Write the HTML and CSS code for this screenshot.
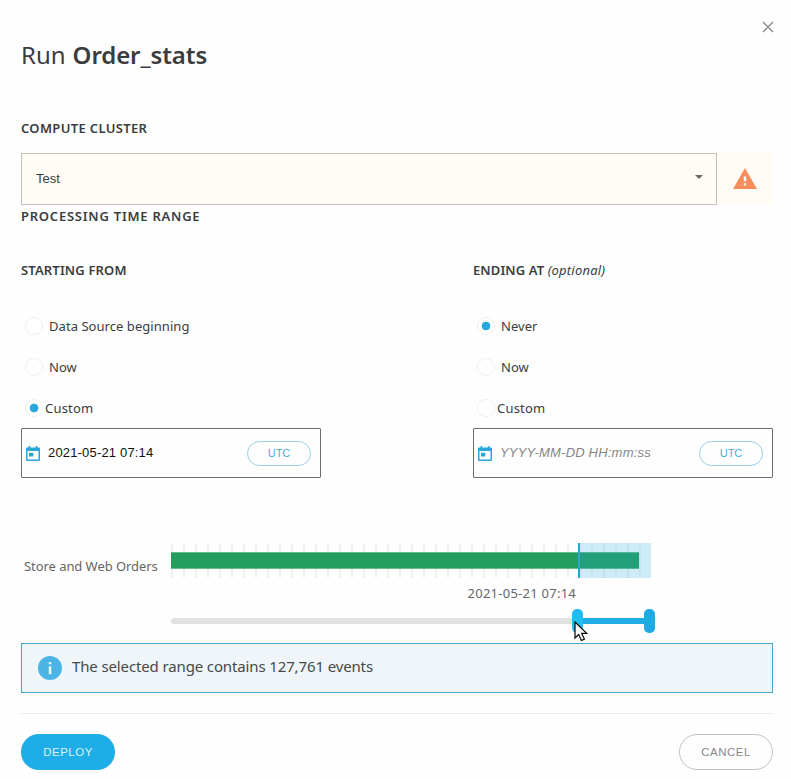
FILE: index.html
```html
<!DOCTYPE html>
<html lang="en">
<head>
<meta charset="utf-8">
<title>Run Order_stats</title>
<link rel="stylesheet" href="styles.css">
</head>
<body>
<main class="dialog">
  <button class="close" aria-label="Close"><svg width="12" height="12" viewBox="0 0 12 12"><path d="M1 1 11 11M11 1 1 11"/></svg></button>
  <h1 class="title"><span class="title-verb">Run</span><strong>Order_stats</strong></h1>

  <h2 class="label label-cluster">COMPUTE CLUSTER</h2>
  <div class="cluster">
    <div class="select"><span>Test</span><svg width="8" height="4" viewBox="0 0 8 4"><path d="M0 0h8L4 4z"/></svg></div>
    <div class="warning"><svg width="24" height="21" viewBox="0 0 24 21"><path fill="#f68d5b" d="M12 0 24 21H0z"/><path fill="#fffcf5" d="M10.800 8.500h2.400v4.800h-2.400zM10.800 15.200h2.400v2.400h-2.400z"/></svg></div>
  </div>
  <h2 class="label label-range">PROCESSING TIME RANGE</h2>

  <div class="columns">
    <section class="column">
      <h3 class="label label-start">STARTING FROM</h3>
      <div class="options">
        <div class="option"><i class="radio"></i><span class="source">Data Source beginning</span></div>
        <div class="option"><i class="radio"></i><span>Now</span></div>
        <div class="option tight"><i class="radio on"></i><span>Custom</span></div>
      </div>
      <div class="date">
        <svg class="calendar" width="14" height="15" viewBox="0 0 14 15"><path fill-rule="evenodd" d="M2.500 0h1.700v1.400h5.600V0h1.700v1.400H13q1 0 1 1V14q0 1-1 1H1q-1 0-1-1V2.400q0-1 1-1h1.500zM1.500 5v8.500h11V5zM3 6.700h4.300v3.800H3z"/></svg>
        <span class="date-value">2021-05-21 07:14</span><span class="zone">UTC</span>
      </div>
    </section>
    <section class="column">
      <h3 class="label label-end">ENDING AT <em>(optional)</em></h3>
      <div class="options">
        <div class="option"><i class="radio on"></i><span>Never</span></div>
        <div class="option"><i class="radio"></i><span>Now</span></div>
        <div class="option tight"><i class="radio"></i><span>Custom</span></div>
      </div>
      <div class="date">
        <svg class="calendar" width="14" height="15" viewBox="0 0 14 15"><path fill-rule="evenodd" d="M2.500 0h1.700v1.400h5.600V0h1.700v1.400H13q1 0 1 1V14q0 1-1 1H1q-1 0-1-1V2.400q0-1 1-1h1.500zM1.500 5v8.500h11V5zM3 6.700h4.300v3.800H3z"/></svg>
        <span class="date-value placeholder">YYYY-MM-DD HH:mm:ss</span><span class="zone">UTC</span>
      </div>
    </section>
  </div>

  <div class="timeline">
    <div class="series">Store and Web Orders</div>
    <div class="plot">
      <div class="strip"><div class="bar"></div><div class="selection"></div></div>
      <div class="stamp">2021-05-21 07:14</div>
      <div class="slider">
        <div class="rail"></div><div class="fill"></div>
        <div class="thumb thumb-start"></div><div class="thumb thumb-end"></div>
        <svg class="pointer" width="14" height="21" viewBox="0 0 14 21"><path d="M1 1v16l3.700-3.500 2.700 6 3-1.300-2.700-5.800h5z"/></svg>
      </div>
    </div>
  </div>

  <div class="notice">
    <svg width="24" height="24" viewBox="0 0 24 24"><circle cx="12" cy="12" r="12" fill="#4db5e6"/><path fill="#e9f7fc" d="M10.800 6h2.500v2.300h-2.500zM10.800 10.200h2.500v8h-2.500z"/></svg>
    <span>The selected range contains 127,761 events</span>
  </div>
  <footer class="actions"><button class="button primary">DEPLOY</button><button class="button">CANCEL</button></footer>
</main>
</body>
</html>
```

FILE: styles.css
```css
* { box-sizing: border-box; }
body { margin: 0; background: #fefefe; color: #3b3c3d; font-family: "Noto Sans", sans-serif; overflow: hidden; }
button { padding: 0; border: 0; background: none; font: inherit; }
svg { display: block; flex: none; }
.dialog { position: relative; height: 779px; padding: 39px 18px 0 21px; }
.close { position: absolute; top: 20.5px; right: 17.5px; }
.close path { stroke: #929292; stroke-width: 1.5; fill: none; }
.title { display: flex; gap: 7px; margin: 0; font-size: 24px; line-height: 32px; font-weight: 400; }
.title strong { font-weight: 600; letter-spacing: -.1px; }
.label { margin: 0; font-size: 13px; line-height: 20px; font-weight: 600; white-space: nowrap; }
.label em { font-weight: 400; letter-spacing: .2px; }
.label-cluster { margin-top: 47px; letter-spacing: .34px; }
.label-range { margin-top: 1px; letter-spacing: .76px; }
.label-start { letter-spacing: .15px; }
.label-end { letter-spacing: .1px; }
.cluster { display: flex; height: 52px; margin-top: 15px; background: #fffcf5; }
.select { display: flex; flex: none; width: 696px; align-items: center; justify-content: space-between; padding: 0 13px 2px 14px; border: 1px solid #c3bfbc; font: 13px "Liberation Sans", sans-serif; }
.select svg { fill: #6b6b68; margin-bottom: 2px; }
.warning { display: flex; flex: 1; align-items: center; justify-content: center; padding-bottom: 2px; }
.columns { display: flex; gap: 152px; margin-top: 34px; }
.column { width: 300px; }
.options { margin-top: 25px; }
.option { display: flex; height: 41px; align-items: center; gap: 6px; padding-left: 4px; font-size: 13px; letter-spacing: .05px; }
.option.tight { gap: 2px; letter-spacing: .2px; }
.radio { width: 18px; height: 18px; border: 1px solid #eeeff0; border-radius: 50%; background: #fff; }
.radio.on { background: radial-gradient(circle, #27a9dc 4px, #fff 4.7px); }
.date { display: flex; height: 50px; align-items: center; padding: 0 9px 0 4px; border: 1px solid #6e6e70; border-radius: 1px; font: 13px "Liberation Sans", sans-serif; color: #111; }
.calendar { fill: #2ba6da; margin-top: 1px; }
.date-value { margin: -2px 0 0 8px; letter-spacing: .17px; }
.placeholder { color: #858585; font-style: italic; letter-spacing: .2px; }
.zone { display: flex; width: 64px; height: 25px; margin-left: auto; align-items: center; justify-content: center; border: 1px solid #9bd0e8; border-radius: 13px; color: #45aedb; font-size: 11px; }
.timeline { display: flex; margin-top: 65px; }
.series { width: 150px; padding: 13px 0 0 3px; font-size: 13px; line-height: 20px; letter-spacing: -.06px; color: #666; white-space: nowrap; }
.plot { width: 480px; }
.strip { position: relative; height: 35px; padding-top: 9px; background: repeating-linear-gradient(90deg, #f1f1f1 0 2px, transparent 2px 12px); }
.bar { width: 468px; height: 17px; background: #239e5c; border: solid #65bb8c; border-width: 1px 0; }
.selection { position: absolute; inset: 0 0 0 407px; background: rgba(29, 171, 225, .21); border-left: 2px solid #2aa5d1; }
.stamp { width: 405px; margin-top: 5px; font-size: 13px; line-height: 20px; letter-spacing: .25px; text-align: right; color: #666; }
.slider { position: relative; height: 24px; margin-top: 6px; }
.rail, .fill, .thumb, .pointer { position: absolute; }
.rail { inset: 9px 0; border-radius: 3px; background: #e1e1e1; }
.fill { inset: 9px 0 9px 406px; background: #1fade7; }
.thumb { top: 0; width: 11px; height: 24px; border-radius: 5px; background: #1eabe3; }
.thumb-start { left: 401px; background: #20bdf5; }
.thumb-end { left: 473px; }
.pointer { left: 403px; top: 12px; fill: #fff; stroke: #111; stroke-width: 1.3; }
.notice { display: flex; height: 50px; margin-top: 10px; align-items: center; gap: 10px; padding: 0 16px; background: #eff5f8; border: 1px solid #3fa7cd; font-size: 15px; letter-spacing: -.13px; color: #45494b; }
.notice span { margin-top: -4px; }
.actions { display: flex; justify-content: space-between; margin-top: 20px; padding-top: 20px; border-top: 1px solid #e8e8e8; }
.button { width: 94px; height: 36px; border: 1px solid #c1c1c1; border-radius: 18px; color: #888; font: 11.5px "Liberation Sans", sans-serif; letter-spacing: .5px; }
.primary { border: 0; background: #1eade6; color: #d8f3ff; }
```
